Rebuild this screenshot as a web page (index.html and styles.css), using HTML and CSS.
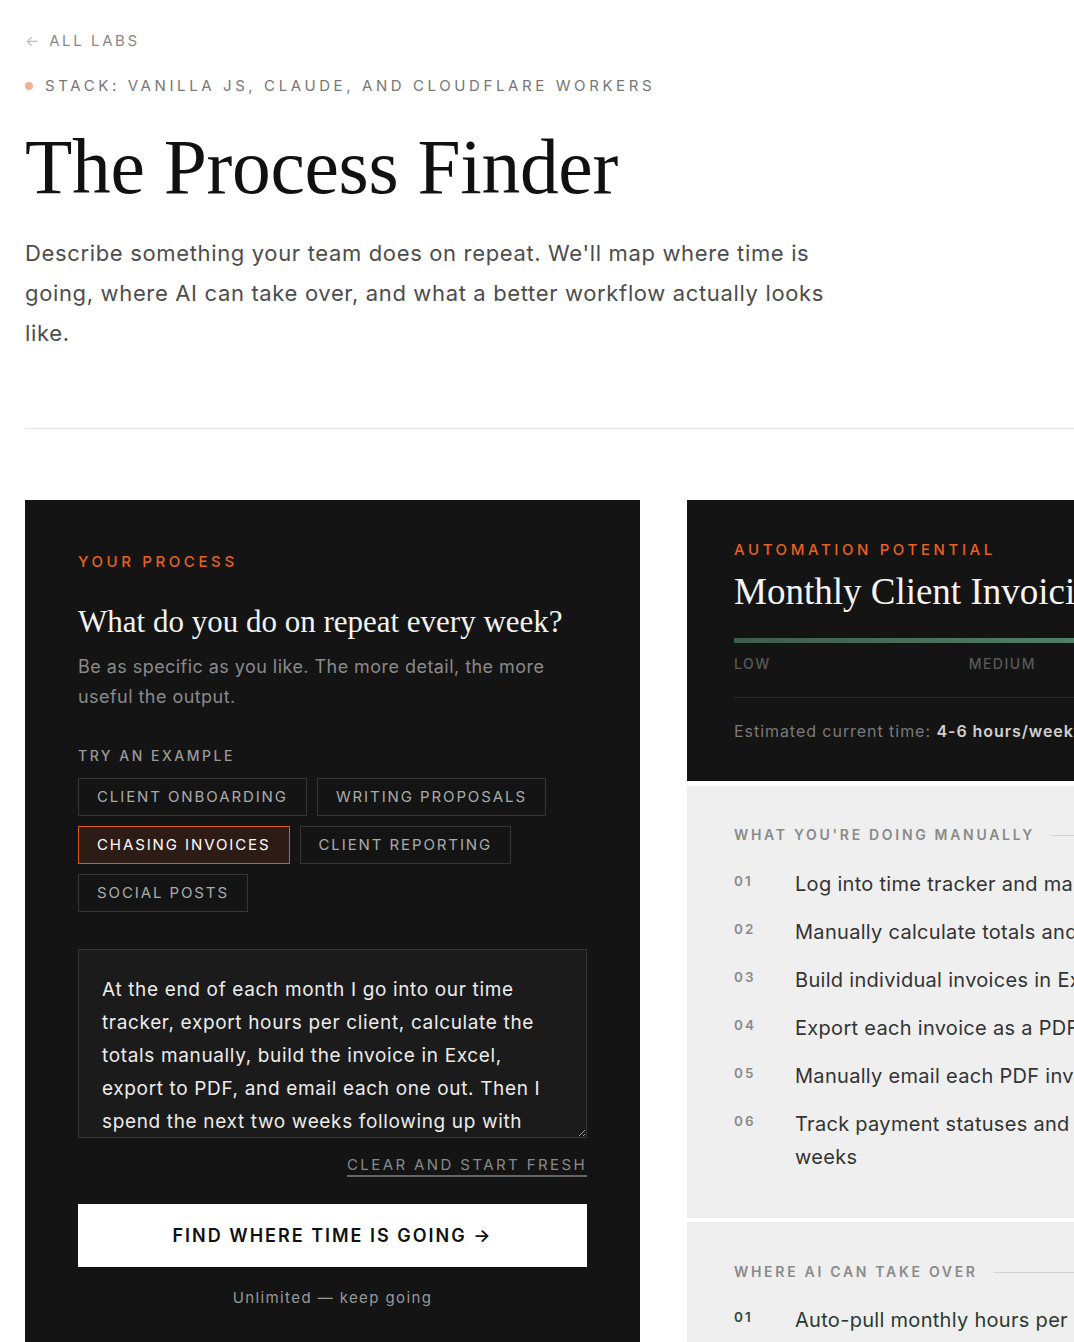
FILE: index.html
```html
<!DOCTYPE html>
<html>
	<head>
		<meta charset="utf-8">
		<title>The Process Finder</title>
		<link rel="stylesheet" href="styles.css">
	</head>
	<body>
		<div class="page">
			<a class="back" href="#"><span class="arrow">&larr;</span> All labs</a>
			<div class="stack"><span class="dot"></span>Stack: Vanilla JS, Claude, and Cloudflare Workers</div>
			<h1 class="title">The Process Finder</h1>
			<p class="intro">Describe something your team does on repeat. We'll map where time is going, where AI can take over, and what a better workflow actually looks like.</p>

			<hr class="rule">

			<div class="lab">
				<div class="input-panel">
					<div class="eyebrow">Your process</div>
					<h2 class="question">What do you do on repeat every week?</h2>
					<p class="hint">Be as specific as you like. The more detail, the more useful the output.</p>

					<div class="label">Try an example</div>
					<div class="chips">
						<button class="chip">Client onboarding</button>
						<button class="chip">Writing proposals</button>
						<button class="chip active">Chasing invoices</button>
						<button class="chip">Client reporting</button>
						<button class="chip">Social posts</button>
					</div>

					<textarea class="process">At the end of each month I go into our time tracker, export hours per client, calculate the totals manually, build the invoice in Excel, export to PDF, and email each one out. Then I spend the next two weeks following up with clients who haven't paid.</textarea>

					<div class="clear-row"><a class="clear" href="#">Clear and start fresh</a></div>

					<button class="submit">Find where time is going &rarr;</button>
					<div class="quota">Unlimited &mdash; keep going</div>
				</div>

				<div class="results">
					<div class="summary">
						<div class="eyebrow">Automation potential</div>
						<h2 class="result-title">Monthly Client Invoicing</h2>
						<div class="meter"><div class="meter-fill"></div></div>
						<div class="scale">
							<span>Low</span>
							<span>Medium</span>
							<span>High</span>
						</div>
						<div class="estimate">Estimated current time: <b>4-6 hours/week</b></div>
					</div>

					<div class="block">
						<div class="block-head">What you're doing manually</div>
						<ol class="steps">
							<li><span class="num">01</span><span class="step">Log into time tracker and manually export</span></li>
							<li><span class="num">02</span><span class="step">Manually calculate totals and rates</span></li>
							<li><span class="num">03</span><span class="step">Build individual invoices in Excel</span></li>
							<li><span class="num">04</span><span class="step">Export each invoice as a PDF</span></li>
							<li><span class="num">05</span><span class="step">Manually email each PDF invoice</span></li>
							<li><span class="num">06</span><span class="step">Track payment statuses and follow up for two weeks</span></li>
						</ol>
					</div>

					<div class="block ai">
						<div class="block-head">Where AI can take over</div>
						<ol class="steps">
							<li><span class="num">01</span><span class="step">Auto-pull monthly hours per client</span></li>
							<li><span class="num">02</span><span class="step">Calculate totals from agreed rates</span></li>
						</ol>
					</div>
				</div>
			</div>
		</div>
	</body>
</html>
```

FILE: styles.css
```css
html, body {margin: 0; padding: 0; background: #fff; overflow-x: hidden;}
body {font-family: Inter, "Liberation Sans", sans-serif; color: #222;}

.page {width: 1297px; padding: 31px 0 0 25px;}

.back {display: block; font-size: 15px; line-height: 20px; letter-spacing: 2.6px; text-transform: uppercase; color: #888; text-decoration: none;}
.back .arrow {color: #bbb; letter-spacing: 0; margin-right: 3px;}

.stack {display: flex; align-items: center; margin-top: 25px; font-size: 15px; line-height: 20px; letter-spacing: 3.6px; text-transform: uppercase; color: #777;}
.stack .dot {width: 8px; height: 8px; border-radius: 50%; background: #f2b093; margin: 0 12px 0 0;}

.title {margin: 29px 0 0; font-family: "Liberation Serif", serif; font-weight: normal; font-size: 77.5px; line-height: 84px; color: #111; letter-spacing: -0.3px;}

.intro {margin: 24px 0 0; max-width: 830px; font-size: 22px; line-height: 40px; letter-spacing: 0.65px; color: #4d4d4d;}

.rule {margin: 75px 0 0; border: 0; border-top: 1px solid #e3e3e3; height: 0;}

.lab {display: grid; grid-template-columns: 615px 635px; gap: 47px; margin-top: 71px; align-items: start;}

/* left: input */
.input-panel {background: #141414; padding: 52px 53px 60px; min-height: 900px; box-sizing: border-box;}

.eyebrow {font-size: 15px; line-height: 20px; letter-spacing: 3.6px; text-transform: uppercase; color: #e8611d; font-weight: 500;}

.question {margin: 32px 0 0; font-family: "Liberation Serif", serif; font-weight: normal; font-size: 31px; line-height: 36px; color: #f2f2f2;}
.hint {margin: 12px 0 0; font-size: 18px; line-height: 30px; letter-spacing: 0.45px; color: #8a8a8a;}

.label {margin-top: 34px; font-size: 14px; line-height: 20px; letter-spacing: 2.5px; text-transform: uppercase; color: #9a9a9a; font-weight: 500;}

.chips {display: flex; flex-wrap: wrap; gap: 10px; margin-top: 12px;}
.chip {font-family: inherit; font-size: 15px; line-height: 20px; letter-spacing: 1.9px; text-transform: uppercase; color: #ababab; background: transparent; border: 1px solid #363636; padding: 8px 18px; cursor: pointer;}
.chip.active {color: #fff; border-color: #e25a18; background: #2d1c15;}

.process {display: block; box-sizing: border-box; width: 100%; height: 189px; margin-top: 37px; padding: 23px 23px; font-family: inherit; font-size: 19px; line-height: 33px; letter-spacing: 0.65px; color: #ececec; background: #1b1b1b; border: 1px solid #363636; resize: vertical; overflow: hidden; outline: none;}

.clear-row {display: flex; justify-content: flex-end; margin-top: 17px;}
.clear {font-size: 15px; line-height: 20px; letter-spacing: 2.4px; text-transform: uppercase; color: #8a8a8a; text-decoration: none; border-bottom: 2px solid #666;}

.submit {display: block; width: 100%; height: 63px; margin-top: 27px; border: 0; background: #fff; color: #111; font-family: inherit; font-size: 18px; font-weight: 600; letter-spacing: 2px; text-transform: uppercase; cursor: pointer;}

.quota {margin-top: 21px; text-align: center; font-size: 15px; line-height: 20px; letter-spacing: 1.4px; color: #999;}

/* right: results */
.results {display: flex; flex-direction: column; gap: 5px;}

.summary {background: #141414; padding: 40px 47px;}
.result-title {margin: 10px 0 0; font-family: "Liberation Serif", serif; font-weight: normal; font-size: 37px; line-height: 44px; color: #f4f4f4; white-space: nowrap;}

.meter {margin-top: 24px; height: 5px; background: #2a2a2a;}
.meter-fill {height: 100%; width: 100%; background: linear-gradient(90deg, #3e5c4c, #5e9479);}

.scale {display: flex; justify-content: space-between; margin-top: 11px; font-size: 14px; line-height: 20px; letter-spacing: 1.5px; text-transform: uppercase; color: #595959; font-weight: 500;}

.estimate {margin-top: 23px; padding-top: 23px; border-top: 1px solid #2a2a2a; font-size: 16px; line-height: 20px; letter-spacing: 0.95px; color: #7a7a7a; white-space: nowrap;}
.estimate b {color: #d0d0d0; font-weight: 600;}

.block {background: #efefef; padding: 39px 47px 44px;}
.block.ai {margin-top: -1px; padding-top: 40px;}

.block-head {display: flex; align-items: center; gap: 16px; font-size: 14px; line-height: 20px; letter-spacing: 2.7px; text-transform: uppercase; color: #8a8a8a; font-weight: 600; white-space: nowrap;}
.block-head::after {content: ""; flex: 1; height: 1px; background: #d2d2d2;}

.steps {list-style: none; margin: 23px 0 0; padding: 0; display: flex; flex-direction: column; gap: 15px;}
.steps li {display: flex;}
.num {flex: 0 0 61px; font-size: 13.5px; line-height: 26px; letter-spacing: 2px; color: #8a8a8a; font-weight: 600;}
.step {flex: 1; font-size: 20px; line-height: 33px; letter-spacing: 0.3px; color: #333;}

.ai .steps {margin-top: 22px;}
.ai .num {color: #2f4a3b;}
.ai .step {color: #2b3a31;}
```
